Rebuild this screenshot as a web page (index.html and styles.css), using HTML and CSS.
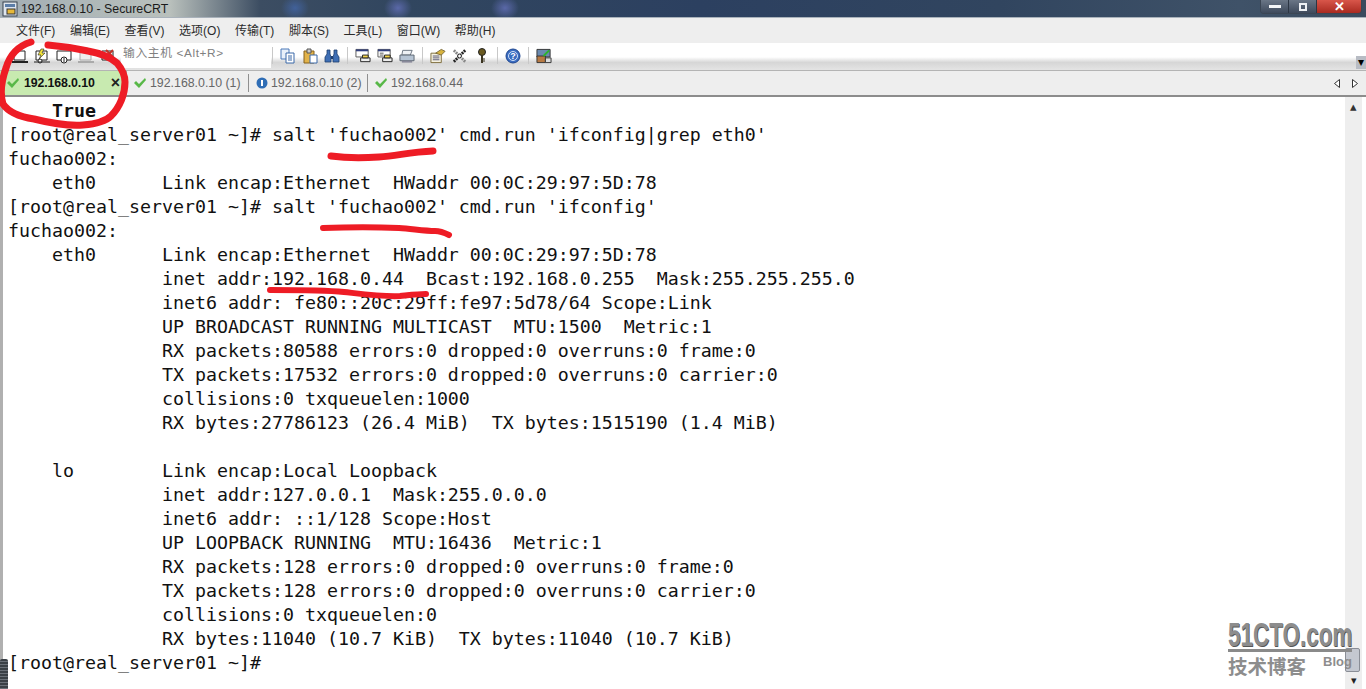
FILE: index.html
```html
<!DOCTYPE html>
<html lang="zh">
<head>
<meta charset="utf-8">
<title>192.168.0.10 - SecureCRT</title>
<link rel="stylesheet" href="styles.css">
</head>
<body>
<div class="app">
  <header class="titlebar">
    <svg class="app-icon" width="16" height="16" viewBox="0 0 16 16"><rect x="1" y="1" width="14" height="14" fill="#dfe6ee" stroke="#39424e"/><rect x="3" y="3" width="10" height="3" fill="#5c7ea8"/><rect x="5" y="8" width="8" height="5" fill="#e7b93a" stroke="#333"/></svg>
    <span class="title-text">192.168.0.10 - SecureCRT</span>
    <div class="win-btns">
      <span class="win-btn win-min"><i></i></span>
      <span class="win-btn win-max"><i></i></span>
      <span class="win-btn win-close">✕</span>
    </div>
  </header>
  <nav class="menubar">
    <span>文件(F)</span><span>编辑(E)</span><span>查看(V)</span><span>选项(O)</span><span>传输(T)</span><span>脚本(S)</span><span>工具(L)</span><span>窗口(W)</span><span>帮助(H)</span>
  </nav>
  <div class="toolbar">
    <div class="tool-group tg-left">
      <svg width="16" height="16" viewBox="0 0 16 16"><path d="M2 3h11v9H2z" fill="#fff" stroke="#222"/><path d="M0 14h16" stroke="#222" stroke-width="2"/></svg>
      <svg width="16" height="16" viewBox="0 0 16 16"><path d="M2 3h11v9H2z" fill="#fff" stroke="#222"/><path d="M7 1 4 7h3L5 11l6-6H8l2-4z" fill="#f2e33a" stroke="#222" stroke-width=".6"/><circle cx="6" cy="13" r="2" fill="#fff" stroke="#222"/><path d="M0 14h16" stroke="#222"/></svg>
      <svg width="16" height="16" viewBox="0 0 16 16"><path d="M1 3h14v9H1z" fill="#fff" stroke="#222"/><circle cx="8" cy="12" r="3" fill="#fff" stroke="#222"/><path d="M8 10v4" stroke="#222"/></svg>
      <svg width="16" height="16" viewBox="0 0 16 16"><path d="M2 3h11v9H2z" fill="#eee" stroke="#aaa"/><path d="M0 14h16" stroke="#aaa" stroke-width="2"/></svg>
      <svg width="16" height="16" viewBox="0 0 16 16"><path d="M2 3h11v9H2z" fill="#fff" stroke="#222"/><path d="m6 2 7 7M13 2 6 9" stroke="#c2342a" stroke-width="2"/></svg>
    </div>
    <div class="host-input">输入主机 &lt;Alt+R&gt;</div>
    <div class="tool-group">
      <i class="sep"></i>
      <svg width="16" height="16" viewBox="0 0 16 16"><path d="M1 1h8v10H1z" fill="#e8f0fa" stroke="#4a78b8"/><path d="M6 5h8v10H6z" fill="#fff" stroke="#3a68a8"/><path d="M8 8h4M8 10h4M8 12h4" stroke="#3a68a8"/></svg>
      <svg width="16" height="16" viewBox="0 0 16 16"><path d="M2 3h10v12H2z" fill="#e2b34a" stroke="#85601c"/><path d="M5 1h4v4H5z" fill="#ccc" stroke="#555"/><path d="M8 7h7v8H8z" fill="#fff" stroke="#3a68a8"/></svg>
      <svg width="16" height="16" viewBox="0 0 16 16"><path d="M3 2h3v4l1 3v5H1V9l2-3zM10 2h3v4l2 3v5H9V9l1-3z" fill="#3f6fb5" stroke="#1f3f70" stroke-width=".8"/><path d="M7 8h2v3H7z" fill="#1f3f70"/></svg>
      <i class="sep"></i>
      <svg width="16" height="16" viewBox="0 0 17 16"><path d="M1 1h13v8H1z" fill="#fff" stroke="#555"/><path d="M1 1h13v2H1z" fill="#33407e"/><path d="M6 10h10v4H6z" fill="#eee" stroke="#222"/><path d="M8 7h6v3H8z" fill="#f2d24a" stroke="#222"/></svg>
      <svg width="16" height="16" viewBox="0 0 17 16"><path d="M1 1h13v8H1z" fill="#fff" stroke="#555"/><path d="M1 1h13v2H1z" fill="#33407e"/><path d="M3 5h4M3 7h4" stroke="#555"/><path d="M6 10h10v4H6z" fill="#eee" stroke="#222"/><path d="M8 7h6v3H8z" fill="#f2d24a" stroke="#222"/></svg>
      <svg width="16" height="16" viewBox="0 0 17 16"><path d="M4 2h10l-2 5H3z" fill="#eef1f5" stroke="#6a7480"/><path d="M1 7h15v6H1z" fill="#b6c4d4" stroke="#5a6470"/><path d="M3 13h11v2H3z" fill="#889"/></svg>
      <i class="sep"></i>
      <svg width="16" height="16" viewBox="0 0 17 16"><path d="M1 5h11v10H1z" fill="#f5f1e0" stroke="#7b6a3a"/><path d="M3 8h7M3 10h7M3 12h7" stroke="#557"/><path d="m6 5 6-4 4 2-4 4z" fill="#d7b33d" stroke="#7b6a3a"/></svg>
      <svg width="16" height="16" viewBox="0 0 17 16"><path d="M2 14 14 2" stroke="#222" stroke-width="3" stroke-dasharray="2 1"/><path d="M2 2l12 12" stroke="#888" stroke-width="3" stroke-dasharray="2 1"/><circle cx="8" cy="8" r="2" fill="#fff" stroke="#222"/></svg>
      <svg class="key" width="10" height="16" viewBox="0 0 10 16"><circle cx="5" cy="4" r="3.5" fill="#6a5a20" stroke="#222"/><path d="M4 7h2v8H4z" fill="#3a3420"/><path d="M6 11h2M6 13h2" stroke="#3a3420"/></svg>
      <i class="sep"></i>
      <svg width="16" height="16" viewBox="0 0 16 16"><circle cx="8" cy="8" r="7" fill="#3a6cc0" stroke="#1f4690"/><circle cx="8" cy="8" r="4.5" fill="none" stroke="#cfe0f8"/><text x="8" y="11" text-anchor="middle" class="help-q">?</text></svg>
      <i class="sep"></i>
      <svg width="16" height="16" viewBox="0 0 17 16"><path d="M1 1h14v8H1z" fill="#6b8ab0" stroke="#333"/><path d="M1 8h9v7H1z" fill="#b77a44" stroke="#333"/><path d="m8 8 6-6" stroke="#2db32d" stroke-width="2"/><path d="M10 10h6v5h-6z" fill="#ddd" stroke="#333"/></svg>
    </div>
    <span class="toolbar-end">▾</span>
  </div>
  <div class="tabs">
    <div class="tab tab-active">
      <svg width="14" height="12" viewBox="0 0 14 12"><path d="m1 6 2-2 3 3 6-6 1 2-7 8z" fill="#58b848"/></svg>
      <b>192.168.0.10</b><span class="tab-x">×</span>
    </div>
    <div class="tab tab-a"><svg width="14" height="12" viewBox="0 0 14 12"><path d="m1 6 2-2 3 3 6-6 1 2-7 8z" fill="#58b848"/></svg>192.168.0.10 (1)</div>
    <div class="tab tab-b"><svg width="12" height="12" viewBox="0 0 12 12"><circle cx="6" cy="6" r="5.5" fill="#2f6db5"/><path d="M5 3h2v6H5z" fill="#fff"/></svg>192.168.0.10 (2)</div>
    <div class="tab tab-last"><svg width="14" height="12" viewBox="0 0 14 12"><path d="m1 6 2-2 3 3 6-6 1 2-7 8z" fill="#58b848"/></svg>192.168.0.44</div>
    <div class="tab-arrows">
      <svg width="6" height="9" viewBox="0 0 6 9"><path d="M5.5.5v8L.5 4.5z" fill="#fff" stroke="#333"/></svg>
      <svg width="6" height="9" viewBox="0 0 6 9"><path d="M.5.5v8l5-4z" fill="#fff" stroke="#333"/></svg>
    </div>
  </div>
  <main class="workspace">
    <pre class="terminal">    <strong>True</strong>
[root@real_server01 ~]# salt 'fuchao002' cmd.run 'ifconfig|grep eth0'
fuchao002:
    eth0      Link encap:Ethernet  HWaddr 00:0C:29:97:5D:78
[root@real_server01 ~]# salt 'fuchao002' cmd.run 'ifconfig'
fuchao002:
    eth0      Link encap:Ethernet  HWaddr 00:0C:29:97:5D:78
              inet addr:192.168.0.44  Bcast:192.168.0.255  Mask:255.255.255.0
              inet6 addr: fe80::20c:29ff:fe97:5d78/64 Scope:Link
              UP BROADCAST RUNNING MULTICAST  MTU:1500  Metric:1
              RX packets:80588 errors:0 dropped:0 overruns:0 frame:0
              TX packets:17532 errors:0 dropped:0 overruns:0 carrier:0
              collisions:0 txqueuelen:1000
              RX bytes:27786123 (26.4 MiB)  TX bytes:1515190 (1.4 MiB)

    lo        Link encap:Local Loopback
              inet addr:127.0.0.1  Mask:255.0.0.0
              inet6 addr: ::1/128 Scope:Host
              UP LOOPBACK RUNNING  MTU:16436  Metric:1
              RX packets:128 errors:0 dropped:0 overruns:0 frame:0
              TX packets:128 errors:0 dropped:0 overruns:0 carrier:0
              collisions:0 txqueuelen:0
              RX bytes:11040 (10.7 KiB)  TX bytes:11040 (10.7 KiB)
[root@real_server01 ~]#</pre>
    <div class="scrollbar"><span class="sb-up">▴</span><span class="sb-thumb"></span><span class="sb-down">▾</span></div>
  </main>
  <span class="left-grip"></span>
  <svg class="ink" width="1366" height="689" viewBox="0 0 1366 689" fill="none" stroke="#ee1c25" stroke-linecap="round" stroke-linejoin="round">
    <path stroke-width="7" d="M31 42C18 46 10 54 6 68 1 82 0 94 3 104c6 9 18 13 31 15 16 4 34 7 49 6 12-1 22-3 28-9 9-9 14-22 14-34 0-7-3-13-8-19-8-7-18-10-29-12-14-3-28-5-40-6"/>
    <path stroke-width="7" d="M331 156c14 2 34 2 48 1 18-1 30-5 54-6"/>
    <path stroke-width="6" d="M323 228c24-1 56-1 76 0 14 1 26 3 36 3 6 0 10 2 14 4"/>
    <path stroke-width="6" d="M270 290c20 0 54 0 74 2 18 2 40 5 56 4 10-1 18-2 26-2"/>
  </svg>
  <div class="watermark">
    <div class="wm-main"><span>51CTO.com</span></div>
    <div class="wm-sub"><span>技术博客</span><em>Blog</em></div>
  </div>
</div>
</body>
</html>
```
FILE: styles.css
```css
* { box-sizing: border-box; }
html, body { margin: 0; padding: 0; }
body { width: 1366px; height: 689px; overflow: hidden; background: #fff; }
.app { position: relative; width: 1366px; height: 689px; overflow: hidden; display: flex; flex-direction: column; font-family: "Liberation Sans", "Noto Sans CJK SC", sans-serif; }
.titlebar { height: 17px; flex: none; display: flex; align-items: center; position: relative;
  background:
    radial-gradient(ellipse 14px 12px at 295px 8px, #41619a, transparent),
    radial-gradient(ellipse 14px 12px at 398px 8px, #5a68a8, transparent),
    radial-gradient(ellipse 14px 12px at 505px 8px, #5a68a8, transparent),
    linear-gradient(90deg, #a3aeb4 0, #b9c0bc 170px, #3c4d62 260px, #31465f 400px, #2c4060 700px, #31455f 1000px, #3f5268 1240px, #3a4b5e 100%); }
.app-icon { margin-left: 2px; flex: none; }
.title-text { margin-left: 3px; font-size: 12.35px; color: #1a1a1a; }
.win-btns { margin-left: auto; margin-right: 4px; display: flex; height: 14px; align-self: flex-start; border: 1px solid #3b4654; border-top: 0; border-radius: 0 0 4px 4px; overflow: hidden; }
.win-btn { display: flex; align-items: center; justify-content: center; height: 13px; }
.win-min { width: 28px; background: linear-gradient(#6a7686, #3e4a5c); border-right: 1px solid #2c3644; }
.win-min i { width: 12px; height: 3px; background: #f4f6f8; }
.win-max { width: 28px; background: linear-gradient(#6a7686, #3e4a5c); border-right: 1px solid #2c3644; }
.win-max i { width: 8px; height: 8px; border: 2px solid #eef1f4; }
.win-close { width: 44px; background: linear-gradient(#d8564a, #a92a20); color: #fff; font-size: 13px; font-weight: 700; }
.menubar { height: 26px; flex: none; display: flex; align-items: center; background: #eeeeee; padding: 0 0 2px 16px; gap: 14.6px; font-size: 12px; color: #2b2b2b; border-top: 1px solid #a9b2bb; }
.toolbar { height: 27px; flex: none; display: flex; align-items: center; background: linear-gradient(#fff 0, #fff 52%, #d6d6d6 72%, #e4e4e4 100%); padding-left: 12px; position: relative; }
.tool-group { display: flex; align-items: center; gap: 6px; margin-top: -2px; }
.tg-left { width: 110px; }
.tool-group .sep { width: 1px; height: 17px; background: #c8c8c8; margin: 0 1px; }
.key { margin: 0 3px; }
.host-input { width: 150px; height: 24px; margin-left: -1px; padding-left: 2px; background: #fff; color: #808080; font-size: 11.8px; letter-spacing: .6px; line-height: 18px; margin-top: -2px; }
.help-q { font: 700 9px "Liberation Sans", sans-serif; fill: #fff; }
.toolbar-end { position: absolute; right: 0; bottom: 1px; width: 10px; height: 13px; background: #b8bcc4; font-size: 12px; line-height: 12px; text-align: center; color: #000; }
.tabs { height: 27px; flex: none; display: flex; align-items: stretch; background: #eeeeee; border-top: 1px solid #b4b4b4; border-bottom: 2px solid #8c8c8c; font-size: 12.35px; color: #666; }
.tab { display: flex; align-items: center; gap: 3px; padding: 0 5px 0 6px; position: relative; white-space: nowrap; }
.tab-a::after, .tab-b::after { content: ""; position: absolute; right: 0; top: 3px; bottom: 3px; width: 1px; background: #8f8f8f; }
.tab-a { width: 122px; }
.tab-b { width: 119px; padding-left: 7px; }
.tab-active { width: 127px; padding-left: 6px; background: #c8eab0; color: #111; border-right: 1px solid #aaa; }
.tab-active svg { margin-right: 1px; }
.tab-active b { font-weight: 700; letter-spacing: -.12px; }
.tab-x { margin-left: auto; margin-right: 1px; font-size: 16px; font-weight: 700; color: #222; }
.tab-arrows { margin-left: auto; display: flex; gap: 12px; align-items: center; padding-right: 8px; }
.workspace { flex: 1; min-height: 0; display: flex; border-left: 3px solid #b0b0b0; background: #fff; padding-right: 4px; }
.terminal { flex: 1; margin: 0; padding: 2px 0 0 5px; font-family: "DejaVu Sans Mono", "Liberation Mono", monospace; font-size: 18.27px; line-height: 24px; color: #111; overflow: hidden; }
.terminal strong { font-weight: 700; }
.scrollbar { width: 17px; flex: none; background: #eeeeee; display: flex; flex-direction: column; justify-content: space-between; align-items: center; }
.sb-up { font-size: 13px; line-height: 13px; margin-top: 3px; color: #333; }
.sb-thumb { width: 15px; height: 24px; margin-top: auto; align-self: flex-start; background: #c4c8d0; border: 1px solid #8a8e96; border-radius: 2px; }
.sb-down { margin-top: 3px; margin-bottom: 3px; font-size: 11px; line-height: 11px; color: #222; }
.left-grip { position: absolute; left: 0; bottom: 0; width: 8px; height: 30px; background: repeating-linear-gradient(#3a4046 0 2px, #6a7078 2px 3px); border-radius: 2px 2px 0 0; }
.ink { position: absolute; left: 0; top: 0; pointer-events: none; }
.watermark { position: absolute; left: 1228px; top: 620px; width: 124px; color: #8d8d8d; }
.wm-main { height: 32px; border-bottom: 3px solid #8a8a8a; white-space: nowrap; }
.wm-main span { display: inline-block; font: 700 33px/29px "Liberation Sans", sans-serif; transform: scaleX(.68); transform-origin: left; text-shadow: 1px 1px 0 #555; }
.wm-sub { display: flex; justify-content: space-between; align-items: flex-start; margin-top: 2px; }
.wm-sub span { font: 700 19.5px/24px "Noto Sans CJK SC", sans-serif; }
.wm-sub em { font: 700 13px/14px "Liberation Sans", sans-serif; margin-top: 1px; }
```
